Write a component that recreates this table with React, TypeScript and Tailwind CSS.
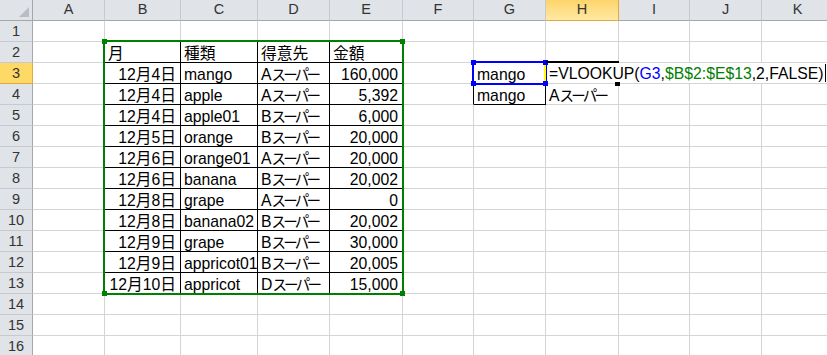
import type { ReactNode } from "react";

type Cell = { text: ReactNode; right?: boolean };

const cols = ["A", "B", "C", "D", "E", "F", "G", "H", "I", "J", "K"];
const rowCount = 16;

// proportional kana, like the sheet's P-gothic face
function shop(letter: string) {
  return (
    <>
      {letter}
      <span className="text-[14.5px] tracking-[-2.75px]">スーパー</span>
    </>
  );
}

const records: [string, string, ReactNode, string][] = [
  ["12月4日", "mango", shop("A"), "160,000"],
  ["12月4日", "apple", shop("A"), "5,392"],
  ["12月4日", "apple01", shop("B"), "6,000"],
  ["12月5日", "orange", shop("B"), "20,000"],
  ["12月6日", "orange01", shop("A"), "20,000"],
  ["12月6日", "banana", shop("B"), "20,002"],
  ["12月8日", "grape", shop("A"), "0"],
  ["12月8日", "banana02", shop("B"), "20,002"],
  ["12月9日", "grape", shop("B"), "30,000"],
  ["12月9日", "appricot01", shop("B"), "20,005"],
  ["12月10日", "appricot", shop("D"), "15,000"],
];

const cells: Record<string, Cell> = {
  B2: { text: "月" },
  C2: { text: "種類" },
  D2: { text: "得意先" },
  E2: { text: "金額" },
  G3: { text: "mango" },
  G4: { text: "mango" },
  H4: { text: shop("A") },
};

records.forEach(([date, kind, name, amount], i) => {
  const r = i + 3;
  cells[`B${r}`] = { text: date, right: true };
  cells[`C${r}`] = { text: kind };
  cells[`D${r}`] = { text: name };
  cells[`E${r}`] = { text: amount, right: true };
});

// which edges get a black rule instead of the grey gridline
function edges(c: number, r: number) {
  const inTable = c >= 1 && c <= 4 && r >= 2 && r <= 13;
  const right =
    inTable ||
    (c === 0 && r >= 2 && r <= 13) ||
    ((c === 5 || c === 6) && (r === 3 || r === 4));
  const bottom =
    inTable || (c >= 1 && c <= 4 && r === 1) || (c === 6 && (r === 3 || r === 4));
  return { right, bottom };
}

function ColumnHeader({ label }: { label: string }) {
  if (label === "H") {
    return (
      <div className="flex items-center justify-center border-r border-b border-r-[#e2a73f] border-b-[#e2a73f] bg-gradient-to-b from-[#fdd46a] to-[#ffe9a2] text-[14.5px] text-[#333]">
        {label}
      </div>
    );
  }
  return (
    <div className="flex items-center justify-center border-r border-b border-r-[#c6cad0] border-b-[#a3a8ae] bg-[#e0e3e8] text-[14.5px] text-[#333]">
      {label}
    </div>
  );
}

function RowHeader({ n }: { n: number }) {
  if (n === 3) {
    return (
      <div className="flex items-center justify-center border-r border-b border-r-[#e2a73f] border-b-[#e2a73f] bg-[#ffd966] pt-[2px] text-[14.5px] text-[#333]">
        {n}
      </div>
    );
  }
  return (
    <div className="flex items-center justify-center border-r border-b border-r-[#a3a8ae] border-b-[#c6cad0] bg-[#e0e3e8] pt-[2px] text-[14.5px] text-[#333]">
      {n}
    </div>
  );
}

// H3 is being edited: its text spills over I3..K3 on a white ground
function FormulaEditor() {
  return (
    <div className="relative z-10 flex h-full w-max items-center bg-white pl-[3px] leading-[23px] whitespace-nowrap text-black">
      <span>=VLOOKUP(</span>
      <span className="text-[#0000ff]">G3</span>
      <span>,</span>
      <span className="text-[#008000]">$B$2:$E$13</span>
      <span>,2,FALSE)</span>
      <span className="ml-[1px] h-[18px] w-px bg-black" />
    </div>
  );
}

function GridCell({ c, r }: { c: number; r: number }) {
  const key = `${cols[c]}${r}`;
  const { right, bottom } = edges(c, r);
  if (key === "H3") {
    return (
      <div className="border-r border-b border-r-[#d4d4d4] border-b-[#d4d4d4]">
        <FormulaEditor />
      </div>
    );
  }
  const cell = cells[key];
  return (
    <div
      className={[
        "overflow-hidden whitespace-nowrap border-r border-b leading-[23px] text-black",
        right ? "border-r-black" : "border-r-[#d4d4d4]",
        bottom ? "border-b-black" : "border-b-[#d4d4d4]",
        cell?.right ? "pr-[4px] text-right" : "pl-[3px] text-left",
      ].join(" ")}
    >
      {cell?.text}
    </div>
  );
}

// coloured outline with the four corner grips Excel draws for a range in a formula
function RangeOutline({ className, color }: { className: string; color: string }) {
  return (
    <div className={`absolute z-20 border-2 ${className}`} style={{ borderColor: color }}>
      <div className="absolute -top-[3px] -left-[3px] h-[5px] w-[5px]" style={{ background: color }} />
      <div className="absolute -top-[3px] -right-[3px] h-[5px] w-[5px]" style={{ background: color }} />
      <div className="absolute -bottom-[3px] -left-[3px] h-[5px] w-[5px]" style={{ background: color }} />
      <div className="absolute -right-[3px] -bottom-[3px] h-[5px] w-[5px]" style={{ background: color }} />
    </div>
  );
}

export default function App() {
  return (
    <div className="relative h-[355px] w-[827px] overflow-hidden bg-white font-['Liberation_Sans','Noto_Sans_CJK_JP',sans-serif] text-[15.75px]">
      <div className="grid grid-cols-[33px_72px_76px_77px_72px_73px_71px_72px_73px_71px_72px_72px] grid-rows-[21px_repeat(16,21px)]">
        {/* select-all corner */}
        <div className="relative border-r border-b border-r-[#a3a8ae] border-b-[#a3a8ae] bg-[#e0e3e8]">
          <svg className="absolute right-[3px] bottom-[3px]" width="10" height="10" viewBox="0 0 10 10">
            <path d="M10 0 L10 10 L0 10 Z" fill="#b9bec5" />
          </svg>
        </div>
        {cols.map((c) => (
          <ColumnHeader key={c} label={c} />
        ))}
        {Array.from({ length: rowCount }, (_, i) => i + 1).map((r) => [
          <RowHeader key={`h${r}`} n={r} />,
          ...cols.map((_, c) => <GridCell key={`${c}-${r}`} c={c} r={r} />),
        ])}
      </div>

      <RangeOutline color="#008000" className="top-[40px] left-[103px] h-[255px] w-[301px]" />
      <RangeOutline color="#0000ff" className="top-[61px] left-[472px] h-[24px] w-[75px]" />

      {/* active-cell marks around H3 */}
      <div className="absolute top-[65px] left-[544px] z-30 h-[16px] w-[2px] bg-[#ffff00]" />
      <div className="absolute top-[61px] left-[546px] z-30 h-[2px] w-[73px] bg-black" />
      <div className="absolute top-[82px] left-[615px] z-30 h-[4px] w-[5px] bg-black" />
    </div>
  );
}
